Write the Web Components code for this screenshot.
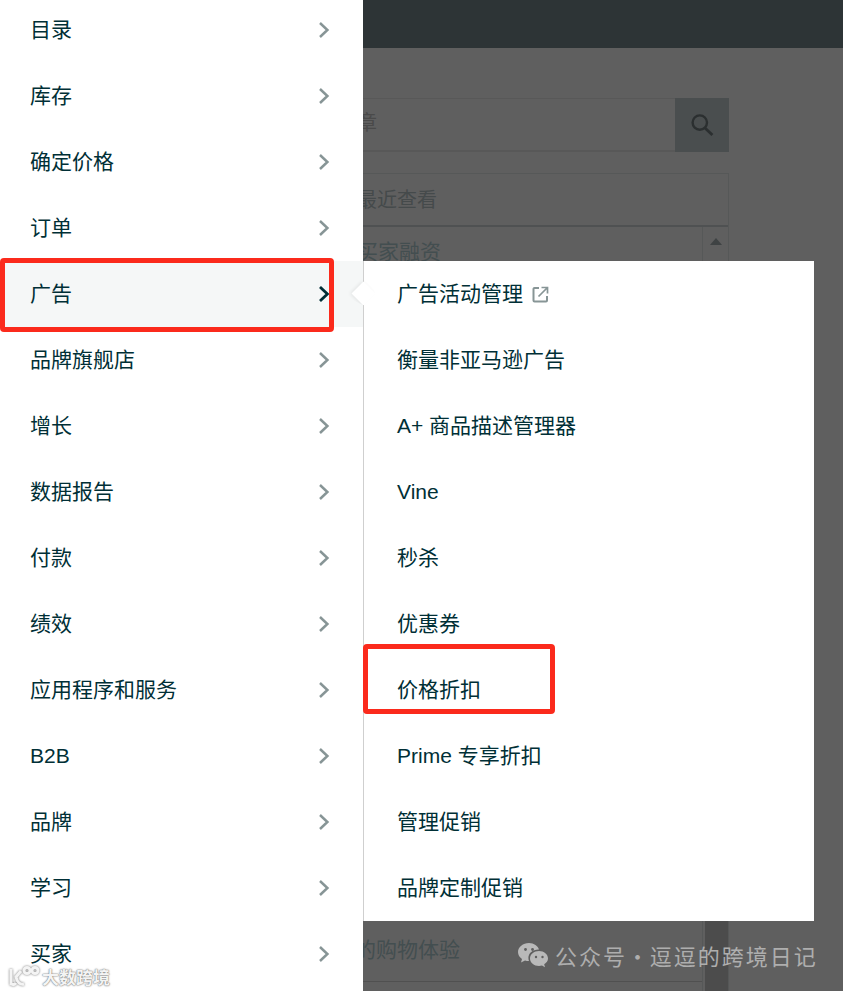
<!doctype html>
<html lang="zh-CN">
  <head>
    <meta charset="UTF-8">
    <title>Seller Central</title>
    <style>
      html, body { margin: 0; height: 991px; overflow: hidden; background: #5f5f5f; }
      body { font-family: "Liberation Sans", "Noto Sans CJK SC", sans-serif; font-size: 21px; color: #002f36; }
    </style>
  </head>
  <body>
    <seller-page>
      <dim-backdrop></dim-backdrop>
      <nav-drawer>
        <nav-item>目录</nav-item>
        <nav-item>库存</nav-item>
        <nav-item>确定价格</nav-item>
        <nav-item>订单</nav-item>
        <nav-item active>广告</nav-item>
        <nav-item>品牌旗舰店</nav-item>
        <nav-item>增长</nav-item>
        <nav-item>数据报告</nav-item>
        <nav-item>付款</nav-item>
        <nav-item>绩效</nav-item>
        <nav-item>应用程序和服务</nav-item>
        <nav-item>B2B</nav-item>
        <nav-item>品牌</nav-item>
        <nav-item>学习</nav-item>
        <nav-item>买家</nav-item>
      </nav-drawer>
      <sub-menu>
        <sub-item external>广告活动管理</sub-item>
        <sub-item>衡量非亚马逊广告</sub-item>
        <sub-item>A+ 商品描述管理器</sub-item>
        <sub-item>Vine</sub-item>
        <sub-item>秒杀</sub-item>
        <sub-item>优惠券</sub-item>
        <sub-item>价格折扣</sub-item>
        <sub-item>Prime 专享折扣</sub-item>
        <sub-item>管理促销</sub-item>
        <sub-item>品牌定制促销</sub-item>
      </sub-menu>
      <red-mark style="left:0;top:258px;width:334px;height:74px"></red-mark>
      <red-mark style="left:363px;top:644px;width:192px;height:70px"></red-mark>
      <water-marks></water-marks>
    </seller-page>

    <script>
      class SellerPage extends HTMLElement {
        constructor() {
          super()
          this.attachShadow({mode: "open"}).innerHTML = `
            <style>
              :host { display: block; position: relative; width: 843px; height: 991px; overflow: hidden; }
            </style>
            <slot></slot>`
        }
      }

      class DimBackdrop extends HTMLElement {
        constructor() {
          super()
          this.attachShadow({mode: "open"}).innerHTML = `
            <style>
              :host { display: flex; flex-direction: column; height: 991px; background: #5f5f5f; color: #454a4b; font-size: 20px; }
              .bar { height: 48px; flex: none; background: #2d3436; }
              .main { flex: 1; min-height: 0; display: flex; flex-direction: column; gap: 21px; padding: 50px 114px 0 340px; }
              .search { height: 54px; flex: none; box-sizing: border-box; display: flex; border-top: 1px solid #585858; border-bottom: 2px solid #585858; }
              .search span { flex: 1; padding-left: 17px; line-height: 48px; color: #4a4a4a; }
              .search button { width: 54px; margin: -1px 0 -2px; padding: 0; border: 0; background: #4a4e4f; display: flex; align-items: center; justify-content: center; }
              .table { flex: 1; min-height: 0; display: flex; flex-direction: column; border-top: 1px solid #565858; border-right: 1px solid #565858; }
              .head { height: 51px; flex: none; padding-left: 17px; line-height: 52px; border-bottom: 2px solid #4f5152; }
              .body { flex: 1; min-height: 0; display: flex; }
              .rows { flex: 1; display: flex; flex-direction: column; justify-content: space-between; padding-bottom: 9px; font-size: 21px; }
              .row { padding-left: 17px; color: #434e50; line-height: 50px; }
              .row.last { padding-left: 15px; line-height: 62px; border-bottom: 1px solid #505050; }
              .scroll { width: 25px; flex: none; display: flex; flex-direction: column; align-items: center; border-left: 1px solid #565858; }
              .up { margin: 11px 0 20px; width: 0; height: 0; border: 6px solid transparent; border-top: 0; border-bottom: 7px solid #3f4344; }
              .thumb { flex: 1; align-self: stretch; margin-left: 2px; background: #4c4c4c; }
            </style>
            <div class="bar"></div>
            <div class="main">
              <div class="search">
                <span>章</span>
                <button>
                  <svg width="24" height="24" viewBox="0 0 24 24" fill="none" stroke="#2b2f30" stroke-width="2.4">
                    <circle cx="9.8" cy="9.6" r="7.2"/><path d="M15 15l7.4 7" stroke-width="2.8"/>
                  </svg>
                </button>
              </div>
              <div class="table">
                <div class="head">最近查看</div>
                <div class="body">
                  <div class="rows">
                    <div class="row">买家融资</div>
                    <div class="row last">的购物体验</div>
                  </div>
                  <div class="scroll"><div class="up"></div><div class="thumb"></div></div>
                </div>
              </div>
            </div>`
        }
      }

      class NavDrawer extends HTMLElement {
        constructor() {
          super()
          this.attachShadow({mode: "open"}).innerHTML = `
            <style>
              :host { display: block; position: absolute; left: 0; top: 0; width: 363px; height: 991px; overflow: hidden; background: #fff; }
              .list { display: flex; flex-direction: column; margin-top: -3px; }
            </style>
            <div class="list"><slot></slot></div>`
        }
      }

      // line-height fixed so the CJK fallback does not push the baseline down
      const menuRowStyle = `
        :host { display: flex; align-items: center; height: 66px; box-sizing: border-box; color: #002f36; font-family: "Liberation Sans", "Noto Sans CJK SC", sans-serif; font-size: 21px; line-height: 24px; white-space: nowrap; }`

      class NavItem extends HTMLElement {
        constructor() {
          super()
          const active = this.hasAttribute("active")
          this.attachShadow({mode: "open"}).innerHTML = `
            <style>
              ${menuRowStyle}
              :host { justify-content: space-between; padding: 0 33px 0 30px; }
              :host([active]) { background: #f5f7f7; }
              svg { display: block; }
            </style>
            <span><slot></slot></span>
            <svg width="12" height="16" viewBox="0 0 12 16" fill="none"
                 stroke="${active ? "#002f36" : "#879596"}" stroke-width="${active ? 2.8 : 2.5}">
              <path d="M2 1l7.4 7-7.4 7"/>
            </svg>`
        }
      }

      class SubMenu extends HTMLElement {
        constructor() {
          super()
          this.attachShadow({mode: "open"}).innerHTML = `
            <style>
              :host { display: block; position: absolute; left: 363px; top: 261px; width: 451px; height: 660px; box-sizing: border-box; background: #fff; border-left: 1px solid #cfcfcf; }
              .tip { position: absolute; left: -9px; top: 24px; width: 17px; height: 17px; background: #fff; transform: rotate(45deg); box-shadow: -1px 1px 4px rgba(0,0,0,.08); clip-path: polygon(-50% 150%, -50% -50%, 100% 0, 100% 100%); }
              .list { display: flex; flex-direction: column; }
            </style>
            <div class="tip"></div>
            <div class="list"><slot></slot></div>`
        }
      }

      class SubItem extends HTMLElement {
        constructor() {
          super()
          this.attachShadow({mode: "open"}).innerHTML = `
            <style>
              ${menuRowStyle}
              :host { padding-left: 33px; gap: 9px; }
              svg { display: block; }
            </style>
            <span><slot></slot></span>
            ${this.hasAttribute("external") ? `
            <svg width="17" height="17" viewBox="0 0 17 17" fill="none" stroke="#879596" stroke-width="2">
              <path d="M7 2H2.500a1 1 0 0 0-1 1v11.500a1 1 0 0 0 1 1H14a1 1 0 0 0 1-1V10"/>
              <path d="M6.500 10.500L15 2M9.500 1.500h6v6" stroke-width="1.700"/>
            </svg>` : ""}`
        }
      }

      class RedMark extends HTMLElement {
        constructor() {
          super()
          this.attachShadow({mode: "open"}).innerHTML = `
            <style>
              :host { display: block; position: absolute; box-sizing: border-box; border: 5px solid #fb2a1c; border-radius: 4px; }
            </style>`
        }
      }

      class WaterMarks extends HTMLElement {
        constructor() {
          super()
          this.attachShadow({mode: "open"}).innerHTML = `
            <style>
              :host { display: block; }
              div { position: absolute; display: flex; align-items: center; white-space: nowrap; font-family: "Noto Sans CJK SC", sans-serif; }
              .left { left: 8px; top: 964px; gap: 0; color: #f4f4f4; font-size: 17px; font-weight: 700; text-shadow: 0 0 2px #777, 0 0 1px #777; }
              .right { left: 518px; top: 939px; gap: 7px; color: #aeaeae; font-size: 22px; letter-spacing: 2px; word-spacing: -7.500px; }
              svg { display: block; }
            </style>
            <div class="left">
              <svg width="34" height="22" viewBox="0 0 34 22" fill="none" stroke="#f4f4f4" stroke-width="3" style="filter:drop-shadow(0 0 1px #777)">
                <path d="M3 3v15c2 1 4 .5 5-1M13 5L8 11c1 5 4 8 8 7"/><circle cx="19" cy="4.500" r="3"/><circle cx="27" cy="4.500" r="3"/>
              </svg>
              <span>大数跨境</span>
            </div>
            <div class="right">
              <svg width="30" height="25" viewBox="0 0 30 25" fill="#b9b9b9">
                <path d="M11 0C5 0 0 4 0 9c0 3 1.500 5.200 4 7l-1 3.500 4-2c1.300.4 2.500.6 4 .6-.4-1-.6-2-.6-3 0-5 4.600-8.500 10-8.500h.6C20 3 16 0 11 0z"/>
                <path d="M21 8c-5 0-9 3.300-9 7.500S16 23 21 23c1 0 2-.2 3-.5l3 1.800-.8-3c2.300-1.500 3.800-3.500 3.800-5.800C30 11.300 26 8 21 8z"/>
                <g fill="#5f5f5f"><circle cx="7.500" cy="6.500" r="1.400"/><circle cx="14.500" cy="6.500" r="1.400"/><circle cx="18" cy="14" r="1.200"/><circle cx="24.500" cy="14" r="1.200"/></g>
              </svg>
              <span>公众号 · 逗逗的跨境日记</span>
            </div>`
        }
      }

      customElements.define("seller-page", SellerPage)
      customElements.define("dim-backdrop", DimBackdrop)
      customElements.define("nav-drawer", NavDrawer)
      customElements.define("nav-item", NavItem)
      customElements.define("sub-menu", SubMenu)
      customElements.define("sub-item", SubItem)
      customElements.define("red-mark", RedMark)
      customElements.define("water-marks", WaterMarks)
    </script>
  </body>
</html>
